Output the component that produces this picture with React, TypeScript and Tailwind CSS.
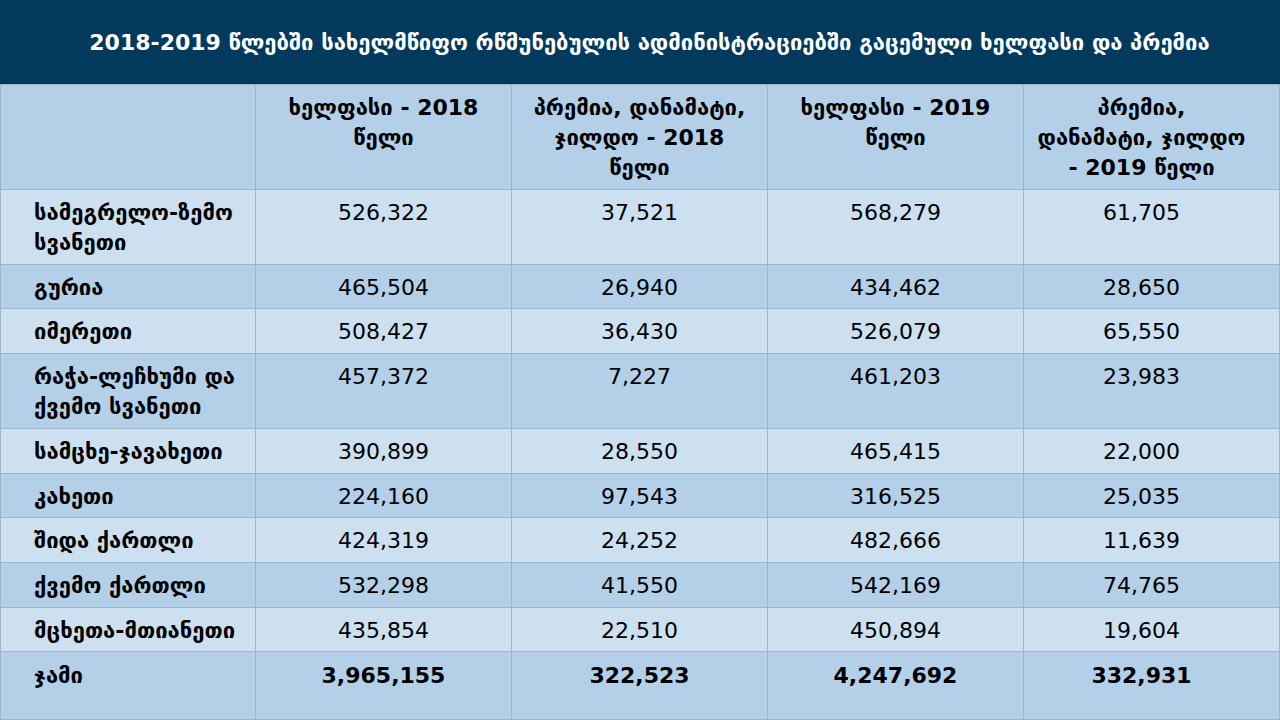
import React from "react";

const rows: { name: string[]; vals: string[]; h: string; light: boolean }[] = [
  { name: ["სამეგრელო-ზემო", "სვანეთი"], vals: ["526,322", "37,521", "568,279", "61,705"], h: "h-[75px]", light: true },
  { name: ["გურია"], vals: ["465,504", "26,940", "434,462", "28,650"], h: "h-[44px]", light: false },
  { name: ["იმერეთი"], vals: ["508,427", "36,430", "526,079", "65,550"], h: "h-[45px]", light: true },
  { name: ["რაჭა-ლეჩხუმი და", "ქვემო სვანეთი"], vals: ["457,372", "7,227", "461,203", "23,983"], h: "h-[75px]", light: false },
  { name: ["სამცხე-ჯავახეთი"], vals: ["390,899", "28,550", "465,415", "22,000"], h: "h-[45px]", light: true },
  { name: ["კახეთი"], vals: ["224,160", "97,543", "316,525", "25,035"], h: "h-[44px]", light: false },
  { name: ["შიდა ქართლი"], vals: ["424,319", "24,252", "482,666", "11,639"], h: "h-[45px]", light: true },
  { name: ["ქვემო ქართლი"], vals: ["532,298", "41,550", "542,169", "74,765"], h: "h-[45px]", light: false },
  { name: ["მცხეთა-მთიანეთი"], vals: ["435,854", "22,510", "450,894", "19,604"], h: "h-[44px]", light: true },
];

const headers: string[][] = [
  [],
  ["ხელფასი - 2018", "წელი"],
  ["პრემია, დანამატი,", "ჯილდო - 2018", "წელი"],
  ["ხელფასი - 2019", "წელი"],
  ["პრემია,", "დანამატი, ჯილდო", "- 2019 წელი"],
];

const cols = "grid grid-cols-[254px_256px_256px_256px_1fr]";

export default function App() {
  return (
    <div className="w-[1280px] h-[720px] overflow-hidden bg-white text-black" style={{ fontFamily: '"DejaVu Sans", sans-serif' }}>
      <div className="h-[84px] bg-[#023a5e] flex items-center justify-center pl-[19px] text-white font-bold text-[22px] whitespace-nowrap">
        2018-2019 წლებში სახელმწიფო რწმუნებულის ადმინისტრაციებში გაცემული ხელფასი და პრემია
      </div>
      <div className="border-l border-r border-b border-[#9db4c9]">
        <div className={`${cols} h-[105px] bg-[#b3d0e8] border-t border-[#9db4c9]`}>
          {headers.map((lines, i) => (
            <div key={i} className={`pt-[8px] text-center font-bold text-[22px] leading-[30px] whitespace-nowrap ${i > 0 ? "border-l border-[#9db4c9]" : ""} ${i === 4 ? "pr-[20px]" : ""}`}>
              {lines.map((l, j) => (
                <div key={j}>{l}</div>
              ))}
            </div>
          ))}
        </div>
        {rows.map((r, i) => (
          <div key={i} className={`${cols} ${r.h} border-t border-[#9db4c9] ${r.light ? "bg-[#cde0f0]" : "bg-[#b3d0e8]"}`}>
            <div className="pt-[8px] pl-[33px] font-bold text-[22px] leading-[30px] whitespace-nowrap">
              {r.name.map((l, j) => (
                <div key={j}>{l}</div>
              ))}
            </div>
            {r.vals.map((v, j) => (
              <div key={j} className={`pt-[8px] text-center text-[22px] leading-[30px] border-l border-[#9db4c9] ${j === 3 ? "pr-[20px]" : ""}`}>
                {v}
              </div>
            ))}
          </div>
        ))}
        <div className={`${cols} h-[68px] border-t border-[#9db4c9] bg-[#b3d0e8]`}>
          <div className="pt-[9px] pl-[33px] font-bold text-[22px] leading-[30px]">ჯამი</div>
          {["3,965,155", "322,523", "4,247,692", "332,931"].map((v, j) => (
            <div key={j} className={`pt-[9px] text-center font-bold text-[22px] leading-[30px] border-l border-[#9db4c9] ${j === 3 ? "pr-[20px]" : ""}`}>
              {v}
            </div>
          ))}
        </div>
      </div>
    </div>
  );
}
